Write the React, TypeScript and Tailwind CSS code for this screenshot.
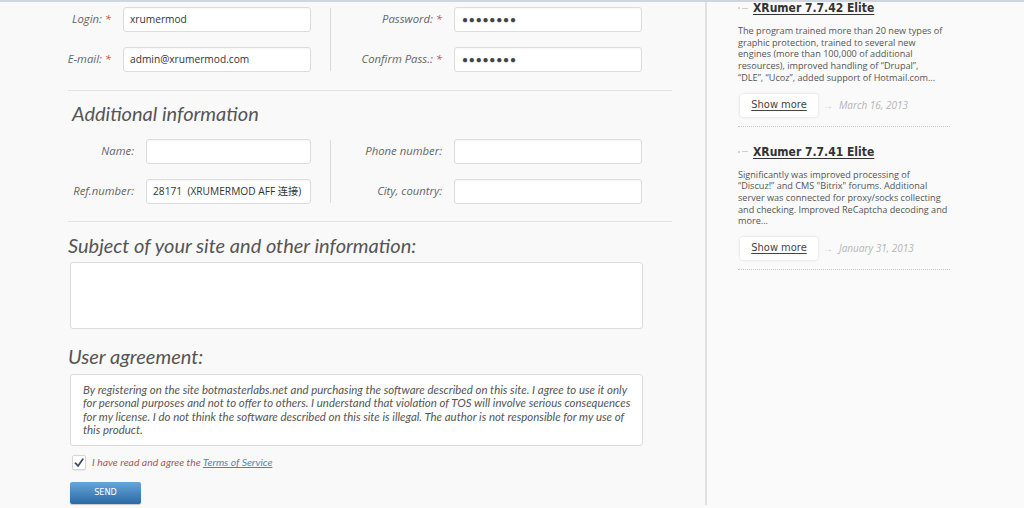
import type { ReactNode } from "react";

const labelFont = { fontFamily: '"Open Sans", "Noto Sans CJK SC", sans-serif' };
const headFont = { fontFamily: 'Lato, "Open Sans", sans-serif' };
const narrowFont = {
  fontFamily: '"DejaVu Sans Condensed", "Liberation Sans Narrow", Roboto, sans-serif',
  fontStretch: "condensed" as const,
};

const agreement = [
  "By registering on the site botmasterlabs.net and purchasing the software described on this site. I agree to use it only",
  "for personal purposes and not to offer to others. I understand that violation of TOS will involve serious consequences",
  "for my license. I do not think the software described on this site is illegal. The author is not responsible for my use of",
  "this product.",
];

function Field({
  label,
  required,
  value,
  password,
  labelW,
  inputW,
}: {
  label: string;
  required?: boolean;
  value?: string;
  password?: boolean;
  labelW: string;
  inputW: string;
}) {
  return (
    <div className="flex items-center gap-3">
      <label
        className={`${labelW} shrink-0 text-right text-[11.3px] italic text-[#666]`}
        style={labelFont}
      >
        {label}
        {required && <span className="text-[#c0504d]"> *</span>}
      </label>
      <div
        className={`${inputW} flex h-[25px] items-center overflow-hidden rounded-[3px] border border-[#dcdcdc] bg-white px-[6px] shadow-[inset_0_1px_2px_rgba(0,0,0,0.04)]`}
      >
        {password ? (
          <span className="pl-[1px] text-[10px] tracking-[0.8px] text-[#444]">●●●●●●●●</span>
        ) : (
          <span className="whitespace-pre text-[10.2px] text-[#333]" style={labelFont}>
            {value}
          </span>
        )}
      </div>
    </div>
  );
}

function Half({ children }: { children: ReactNode }) {
  return <div className="flex flex-col gap-[15px]">{children}</div>;
}

function Heading({ children, className }: { children: ReactNode; className: string }) {
  return (
    <h2 className={`italic text-[#555] ${className}`} style={headFont}>
      {children}
    </h2>
  );
}

function NewsItem({
  title,
  lines,
  date,
  first,
}: {
  title: string;
  lines: string[];
  date: string;
  first?: boolean;
}) {
  return (
    <div className={first ? "" : "mt-[19px]"}>
      <div className="flex h-[12px] items-center leading-[12px]">
        <span className="flex w-[15px] items-center">
          <span className="h-[2px] w-[2px] bg-[#d5d5d5]" />
          <span className="ml-[2px] h-px w-[6px] bg-[#cfcfcf]" />
        </span>
        <a
          className="text-[12px] font-bold text-[#333] underline underline-offset-2"
          style={narrowFont}
        >
          {title}
        </a>
      </div>
      <p className="mt-[11px] text-[9.15px] leading-[11.7px] text-[#555]" style={labelFont}>
        {lines.map((l) => (
          <span key={l} className="block whitespace-nowrap">
            {l}
          </span>
        ))}
      </p>
      <div className="mt-[10px] flex items-center">
        <button
          type="button"
          className="ml-[2px] h-[23px] w-[78px] rounded-[3px] bg-white text-[11px] text-[#444] underline underline-offset-2 shadow-[0_0_3px_rgba(0,0,0,0.15)]"
          style={narrowFont}
        >
          Show more
        </button>
        <span className="ml-[5px] text-[10px] text-[#c8c8c8]">→</span>
        <span className="ml-[6px] text-[10px] italic text-[#b5b5b5]" style={labelFont}>
          {date}
        </span>
      </div>
      <div className="mt-[9px] w-[212px] border-t border-dotted border-[#c8c8c8]" />
    </div>
  );
}

export default function App() {
  return (
    <div className="flex h-[508px] w-[1024px] overflow-hidden border-t-2 border-[#cfd6dd] bg-[#f9f9f9]">
      {/* form column */}
      <div className="h-[503px] w-[707px] shrink-0 border-r-2 border-[#e1e1e1]">
        <div className="flex pt-[5px]">
          <Half>
            <Field label="Login:" required value="xrumermod" labelW="w-[111px]" inputW="w-[188px]" />
            <Field
              label="E-mail:"
              required
              value="admin@xrumermod.com"
              labelW="w-[111px]"
              inputW="w-[188px]"
            />
          </Half>
          <div className="ml-[19px] mt-[1px] h-[63px] border-l border-[#dadada]" />
          <Half>
            <Field label="Password:" required password labelW="w-[111px]" inputW="w-[188px]" />
            <Field label="Confirm Pass.:" required password labelW="w-[111px]" inputW="w-[188px]" />
          </Half>
        </div>

        <div className="ml-[68px] mt-[18px] w-[604px] border-t border-[#e3e3e3]" />

        <Heading className="ml-[72px] mt-[9px] h-[26px] text-[20px] leading-[26px]">
          Additional information
        </Heading>

        <div className="mt-[13px] flex">
          <Half>
            <Field label="Name:" labelW="w-[134px]" inputW="w-[165px]" />
            <Field
              label="Ref.number:"
              value="28171  (XRUMERMOD AFF 连接)"
              labelW="w-[134px]"
              inputW="w-[165px]"
            />
          </Half>
          <div className="ml-[19px] mt-[1px] h-[63px] border-l border-[#dadada]" />
          <Half>
            <Field label="Phone number:" labelW="w-[111px]" inputW="w-[188px]" />
            <Field label="City, country:" labelW="w-[111px]" inputW="w-[188px]" />
          </Half>
        </div>

        <div className="ml-[68px] mt-[17px] w-[604px] border-t border-[#e3e3e3]" />

        <div className="ml-[68px]">
          <Heading className="mt-[11px] h-[24px] text-[20px] leading-[24px]">
            Subject of your site and other information:
          </Heading>
          <div className="ml-[2px] mt-[5px] h-[67px] w-[573px] rounded-[3px] border border-[#dcdcdc] bg-white" />

          <Heading className="mt-[15px] h-[25px] text-[20px] leading-[25px]">
            User agreement:
          </Heading>
          <div
            className="ml-[2px] mt-[5px] h-[72px] w-[573px] overflow-hidden rounded-[3px] border border-[#dcdcdc] bg-white pl-[12px] pt-[8px] text-[11.45px] italic leading-[13.3px] text-[#555]"
            style={headFont}
          >
            {agreement.map((l) => (
              <span key={l} className="block whitespace-nowrap">
                {l}
              </span>
            ))}
          </div>

          <div className="ml-[4px] mt-[9px] flex items-center">
            <span className="flex h-[15px] w-[14px] items-center justify-center rounded-[2px] border border-[#d6d6d6] bg-white shadow-[0_1px_1px_rgba(0,0,0,0.08)]">
              <svg width="10" height="10" viewBox="0 0 10 10">
                <path
                  d="M1.5 5.2 L4 8 L8.8 1.2"
                  fill="none"
                  stroke="#3d4f66"
                  strokeWidth="1.8"
                  strokeLinecap="round"
                  strokeLinejoin="round"
                />
              </svg>
            </span>
            <span className="ml-[6px] text-[10.4px] italic text-[#a45a5a]" style={headFont}>
              I have read and agree the{" "}
              <a className="text-[#4a87b5] underline">Terms of Service</a>
            </span>
          </div>

          <button
            type="button"
            className="ml-[2px] mt-[11px] h-[22px] w-[71px] rounded-[2px] bg-gradient-to-b from-[#66a6da] to-[#2b6aa3] text-[9px] text-white shadow-[0_1px_1px_rgba(0,0,0,0.2)]"
            style={narrowFont}
          >
            SEND
          </button>
        </div>
      </div>

      {/* sidebar */}
      <div className="flex-1 bg-[#fafafa] pl-[31px]">
        <NewsItem
          first
          title="XRumer 7.7.42 Elite"
          lines={[
            "The program trained more than 20 new types of",
            "graphic protection, trained to several new",
            "engines (more than 100,000 of additional",
            "resources), improved handling of “Drupal”,",
            "“DLE”, “Ucoz”, added support of Hotmail.com...",
          ]}
          date="March 16, 2013"
        />
        <NewsItem
          title="XRumer 7.7.41 Elite"
          lines={[
            "Significantly was improved processing of",
            "“Discuz!” and CMS \"Bitrix\" forums. Additional",
            "server was connected for proxy/socks collecting",
            "and checking. Improved ReCaptcha decoding and",
            "more...",
          ]}
          date="January 31, 2013"
        />
      </div>
    </div>
  );
}
